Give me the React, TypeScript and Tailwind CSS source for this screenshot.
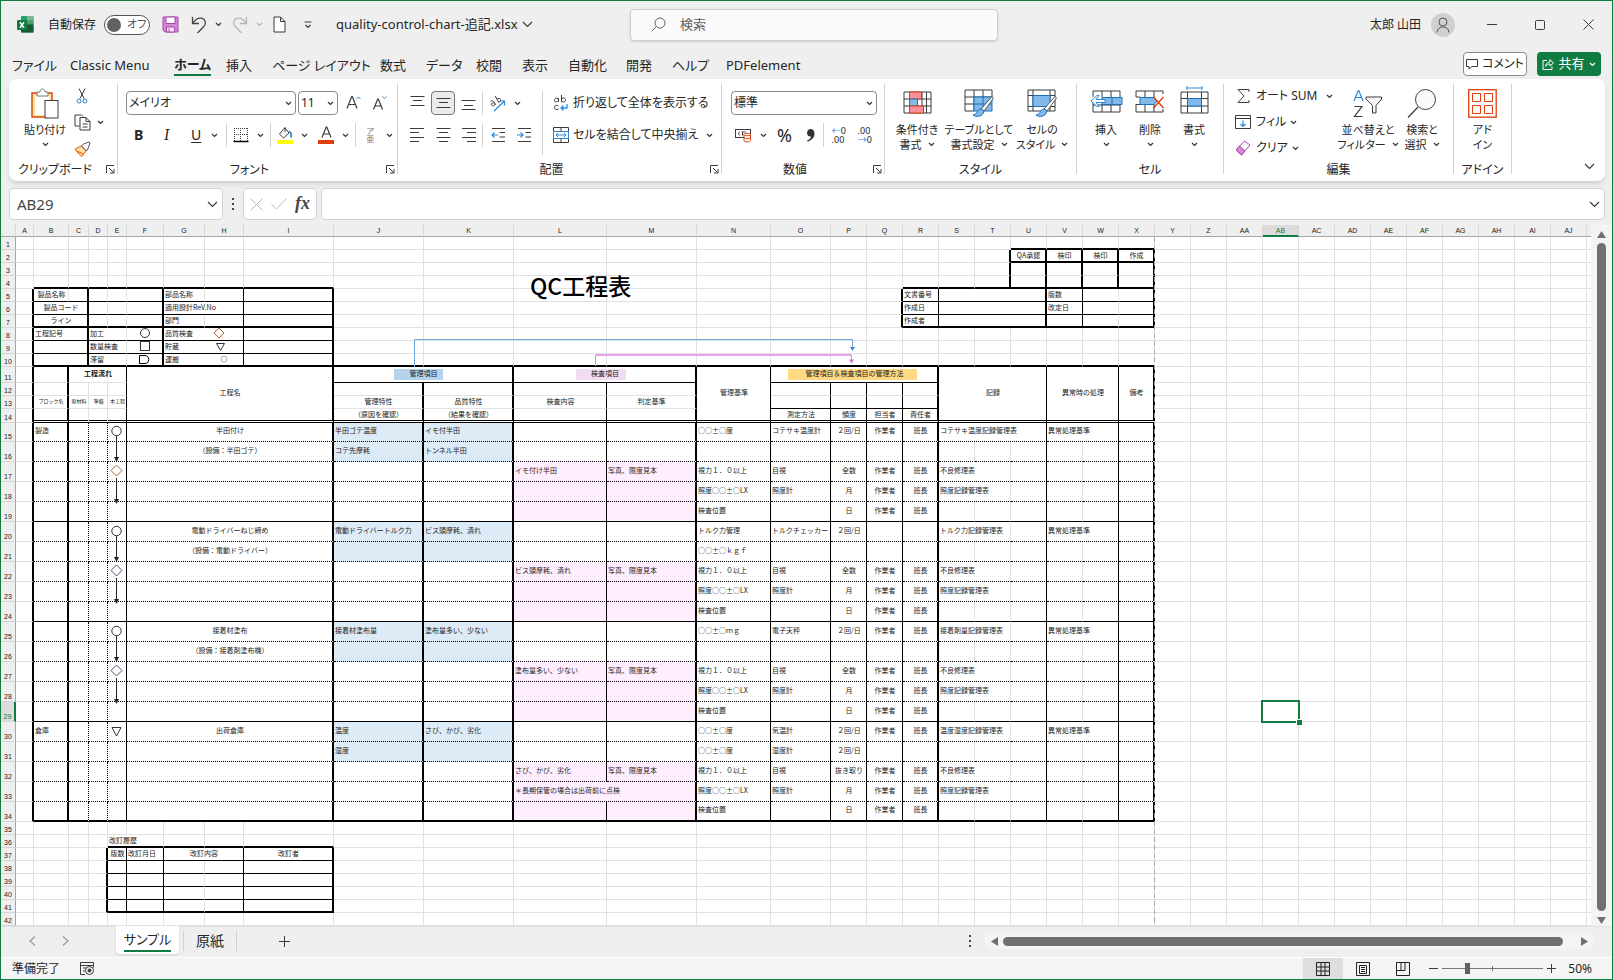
import type { ReactNode } from 'react'
import { clsx } from 'clsx'

/* ---------- icons ---------- */

type SvgProps = { w: number; h: number; children: ReactNode; stroke?: string }

function Svg({ w, h, children, stroke = '#3b3b3b' }: SvgProps) {
  return (
    <svg width={w} height={h} viewBox={`0 0 ${w} ${h}`} fill="none" stroke={stroke} className="shrink-0" aria-hidden="true">
      {children}
    </svg>
  )
}

const Chevron = ({ color = '#333' }: { color?: string }) => (
  <Svg w={7} h={5} stroke={color}>
    <path d="M1 1l2.5 2.5L6 1" strokeWidth="1.2" />
  </Svg>
)

const BigChevron = () => (
  <Svg w={11} h={7}>
    <path d="M1 1l4.5 4.5L10 1" strokeWidth="1.2" />
  </Svg>
)

const ExcelLogo = () => (
  <Svg w={17} h={17} stroke="none">
    <rect x="4" y="0" width="12.5" height="16.5" rx="1" fill="#21a366" />
    <rect x="10" y="0" width="6.5" height="4.5" fill="#7fb596" />
    <rect x="4" y="4.5" width="6" height="4" fill="#107c41" />
    <rect x="10" y="4.5" width="6.5" height="4" fill="#4ca06e" />
    <rect x="4" y="8.5" width="12.5" height="8" fill="#185c37" />
    <rect x="0" y="4" width="10" height="10" rx="1" fill="#107c41" />
    <path d="M3 6.2l4 5.6M7 6.2l-4 5.6" stroke="#fff" strokeWidth="1.5" />
  </Svg>
)

const SaveIcon = () => (
  <Svg w={17} h={17} stroke="#a349a4">
    <path d="M1 1h15v15H3l-2-2z" fill="#d586dc" />
    <path d="M4 1h9v6.5H4z" fill="#fff" />
    <path d="M4.5 16v-5h8v5z" fill="#f6e6f7" />
    <path d="M7 12.5V16" />
  </Svg>
)

const UndoIcon = ({ color = '#444' }: { color?: string }) => (
  <Svg w={16} h={18} stroke={color}>
    <path d="M1.5 1v6.5H8M1.5 7.5C4 3.500 7 1.500 10.500 2.200c4 1 5 5 2.500 8L6.500 17" strokeWidth="1.3" />
  </Svg>
)

const NewDocIcon = () => (
  <Svg w={13} h={17}>
    <path d="M1 1h6.500l4.500 4.500V16H1zM7.500 1v4.500H12" fill="#fff" />
  </Svg>
)

const SearchIcon = () => (
  <Svg w={15} h={15} stroke="#666">
    <circle cx="9" cy="6" r="5" />
    <path d="M5.500 9.500L.7 14.300" />
  </Svg>
)

const PasteIcon = () => (
  <Svg w={28} h={31}>
    <rect x="1" y="5" width="20" height="24" stroke="#d9480f" strokeWidth="1.500" fill="#ffe3a3" />
    <rect x="4" y="8" width="14" height="19" fill="#fff" stroke="none" />
    <path d="M6 8V4h3c0-4 5-4 5 0h3v4z" fill="#fff" stroke="#777" />
    <rect x="14" y="12.500" width="13" height="17.500" fill="#fff" />
  </Svg>
)

const CutIcon = () => (
  <Svg w={12} h={16}>
    <path d="M3 .5l5 10M9 .5l-5 10" />
    <circle cx="3" cy="13" r="2" stroke="#2b88d8" />
    <circle cx="9" cy="13" r="2" stroke="#2b88d8" />
  </Svg>
)

const CopyIcon = () => (
  <Svg w={17} h={17}>
    <path d="M5.500 12H1V1h6.500L9 2.500" />
    <path d="M6 3.500h6l4 4V16H6zM12 3.500v4h4M8.500 10h5M8.500 13h5" fill="#fff" />
  </Svg>
)

const BrushIcon = () => (
  <Svg w={17} h={16}>
    <path d="M1 8l6-3 5 5-4 5.500L4 12z" fill="#ffe0a3" stroke="#e8590c" />
    <path d="M2.500 10l7 3" stroke="#e8590c" />
    <path d="M7.500 5l5 5 1.500-2.500L16 2l-1-1-5.500 2z" fill="#fff" stroke="#555" />
  </Svg>
)

const BordersIcon = () => (
  <Svg w={16} h={16}>
    <path d="M1 1.500h14M1 7.500h14M1.500 1v13M7.500 1v13M14.500 1v13" strokeDasharray="1 1" />
    <path d="M.5 14.500h15" stroke="#000" strokeWidth="1.500" />
  </Svg>
)

const FillIcon = () => (
  <Svg w={16} h={18}>
    <path d="M7 2.500L2.500 8l4 4 5.500-5-3.500-4.500zM8 1v5" fill="#fff" />
    <path d="M12 5.500c2 .5 2.500 3 2 6" stroke="#2b88d8" strokeWidth="1.800" />
    <rect x="0" y="14" width="16" height="4" fill="#ffff00" stroke="none" />
  </Svg>
)

const FontColorIcon = () => (
  <Svg w={16} h={18}>
    <path d="M4 11.500L8.200 1h.6L13 11.500M5.500 8h6" strokeWidth="1.200" />
    <rect x="0" y="14" width="16" height="4" fill="#e03e0c" stroke="none" />
  </Svg>
)

const GrowFontIcon = ({ down = false }: { down?: boolean }) => (
  <Svg w={16} h={16}>
    {down ? (
      <>
        <path d="M1.500 14.500L5.700 4h.6l4.200 10.500M3 11h6" strokeWidth="1.200" />
        <path d="M10.500 1.500l2 2 2-2" stroke="#2b88d8" />
      </>
    ) : (
      <>
        <path d="M1 13.500L5.700 1.500h.6L11 13.500M2.700 9.500h6.600" strokeWidth="1.200" />
        <path d="M10.500 4l2-2 2 2" stroke="#2b88d8" />
      </>
    )}
  </Svg>
)

const Lines = ({ d }: { d: string }) => (
  <Svg w={15} h={14}>
    <path d={d} />
  </Svg>
)

const OrientIcon = () => (
  <Svg w={17} h={17}>
    <path d="M5 16L15 6.500M11 6h4.500v4.500" stroke="#2b88d8" strokeWidth="1.200" />
    <path d="M1.500 6.500c1-1.500 3-1 4 1l1 2M5.500 8c-2-.5-4 .5-3 2s3 1 3.500-1M6 1l4 6.500M8 4.500c1-1.500 3-1.500 3.500 0s-.5 2.500-2 2.500" />
  </Svg>
)

const IndentIcon = ({ right = false }: { right?: boolean }) => (
  <Svg w={15} h={14}>
    <path d="M1 .5h13M8.500 4.500H14M8.500 9H14M1 13.500h13" />
    <path d={right ? 'M0 7h6M3.500 4.500L6 7 3.500 9.500' : 'M7 7H1M3.500 4.500L1 7l2.500 2.500'} stroke="#2b88d8" strokeWidth="1.200" />
  </Svg>
)

const MergeIcon = () => (
  <Svg w={16} h={16}>
    <path d="M.5 4.500v-4h15v4M.5 11.500v4h15v-4M8 .5v4M8 11.500v4" />
    <rect x=".5" y="4.500" width="15" height="7" stroke="#2b88d8" fill="#fff" />
    <path d="M3 8h10M5 6L3 8l2 2M11 6l2 2-2 2" stroke="#2b88d8" />
  </Svg>
)

const CurrencyIcon = () => (
  <Svg w={17} h={15}>
    <rect x=".5" y="1.500" width="15" height="8" />
    <path d="M5 4c-2 0-2 3 0 3M7.500 3.500v4M7.500 4h3" />
    <path d="M9 6.500v6c0 2 6.500 2 6.500 0v-6" fill="#fff" stroke="#d9480f" />
    <ellipse cx="12.200" cy="6.500" rx="3.300" ry="1.300" fill="#fff" stroke="#d9480f" />
    <path d="M9 9.500c1 1.500 5.500 1.500 6.500 0" stroke="#d9480f" />
  </Svg>
)

const PaintBrush = () => (
  <>
    <path d="M17 20L28 7.500l1.500 1.500L20 22z" fill="#fff" stroke="#555" />
    <path d="M17 20c-4 0-3 5-8 6 3 2.500 10 2 11-4z" fill="#83b9ea" stroke="#1d6fb8" />
  </>
)

const CondFormatIcon = () => (
  <Svg w={29} h={24}>
    <path d="M1 1h27v21H1zM1 8h27M1 15h27M6.500 1v21M19 1v21M23.500 1v21" />
    <rect x="6.500" y="1" width="12" height="7" fill="#fb8f98" stroke="#e03e0c" />
    <rect x="6.500" y="8" width="8" height="7" fill="#83b9ea" stroke="#1d6fb8" />
    <rect x="6.500" y="15" width="14" height="7" fill="#fb8f98" stroke="#e03e0c" />
  </Svg>
)

const TableFormatIcon = () => (
  <Svg w={31} h={28}>
    <path d="M10 22H1V1h27v7M1 8h27M1 15h10M10 1v21M19 1v7" />
    <path d="M10 8h18v14H10zM10 15h18M19 8v14" fill="#83b9ea" stroke="#1d6fb8" />
    <PaintBrush />
  </Svg>
)

const CellStyleIcon = () => (
  <Svg w={31} h={28}>
    <path d="M1 1h27v21H1zM1 6.500h27M1 17.500h27M6 1v21M23 1v21" />
    <rect x="6" y="6.500" width="17" height="11" fill="#83b9ea" stroke="#1d6fb8" />
    <PaintBrush />
  </Svg>
)

const InsertCellsIcon = () => (
  <Svg w={33} h={35}>
    <path d="M3 11V5h27v6M3 17v9h27v-9M12 5v6M21 5v6M12 18v8M21 18v8M3 19h27" />
    <path d="M12 11.500h20v7H12zM22 11.500v7" fill="#83b9ea" stroke="#1d6fb8" />
    <path d="M15 13.500H6l3-4H7L1 15l6 5.500h2l-3-4h9z" fill="#fff" stroke="#2b88d8" />
  </Svg>
)

const DeleteCellsIcon = () => (
  <Svg w={31} h={35}>
    <path d="M1 11V5h27v3M1 18v8h27v-3M10 5v6M19 5v6M10 18v8M19 18v8M1 11h4M1 18.500h18" />
    <path d="M5 11.500h14l3 3.500-3 3.500H5z" fill="#83b9ea" stroke="#1d6fb8" />
    <path d="M18.500 11l10 11M28.500 11l-10 11" stroke="#e03e0c" strokeWidth="1.400" />
  </Svg>
)

const FormatCellsIcon = () => (
  <Svg w={29} h={35}>
    <path d="M7 2h15M7 0v4M22 0v4" stroke="#2b88d8" />
    <path d="M1 6h27v21H1zM1 12.500h27M1 20h27M7.500 6v21M21.500 6v21" />
    <rect x="7.500" y="12.500" width="14" height="7.500" fill="#83b9ea" stroke="#1d6fb8" />
  </Svg>
)

const SortFilterIcon = () => (
  <Svg w={30} h={29}>
    <path d="M1 12L5.300 1.500h.5L10 12M2.500 8.500h6" stroke="#2b88d8" strokeWidth="1.200" />
    <path d="M1.500 17.500H9l-7.500 10H9.500" strokeWidth="1.200" />
    <path d="M13 8h15.500v2L23 16.500V24h-3.500v-7.500L13 10z" fill="#fafafa" />
  </Svg>
)

const FindIcon = () => (
  <Svg w={30} h={30}>
    <circle cx="18.500" cy="11.500" r="10" fill="#fafafa" />
    <path d="M11 19L1 29.500" strokeWidth="1.200" />
  </Svg>
)

const AddinIcon = () => (
  <Svg w={29} h={29} stroke="#e03e0c">
    <rect x=".7" y=".7" width="27.500" height="27.500" strokeWidth="1.300" />
    <path d="M4.500 4.500h8v8h-8zM16.500 4.500h8v8h-8zM4.500 16.500h8v8h-8zM16.500 16.500h8v8h-8z" />
  </Svg>
)

const LauncherIcon = () => (
  <Svg w={9} h={9}>
    <path d="M.5 8V.5H8M3 3l4.500 4.500M8 4v4H4" />
  </Svg>
)

/* ---------- title bar and tabs ---------- */

function TitleBar() {
  return (
    <header className="flex h-[47px] items-center pl-4">
      <ExcelLogo />
      <label className="ml-3.5 flex items-center gap-2 text-xs">
        自動保存
        <input type="checkbox" className="peer sr-only" />
        <span className="flex h-5 w-[46px] items-center rounded-full border border-[#555] bg-white pl-0.5 text-[11px] text-[#555]">
          <span className="mr-1.5 size-3.5 rounded-full bg-[#616161]" />
          オフ
        </span>
      </label>
      <button className="ml-3" aria-label="上書き保存"><SaveIcon /></button>
      <button className="ml-3 flex items-center gap-2" aria-label="元に戻す"><UndoIcon /><Chevron /></button>
      <button className="ml-2.5 flex items-center gap-2" aria-label="やり直し">
        <span className="-scale-x-100"><UndoIcon color="#b5b5b5" /></span>
        <Chevron color="#b5b5b5" />
      </button>
      <button className="ml-2.5" aria-label="新規作成"><NewDocIcon /></button>
      <button className="ml-[18px]" aria-label="クイック アクセス ツール バーのユーザー設定">
        <Svg w={8} h={8}><path d="M.5 1h7M1.500 4L4 6.500 6.500 4" strokeWidth="1.200" /></Svg>
      </button>
      <button className="ml-6 flex w-[294px] items-center gap-1 text-[13px]">
        quality-control-chart-追記.xlsx
        <BigChevron />
      </button>

      <label className="flex h-8 w-[368px] items-center gap-3.5 rounded-sm border border-[#cfcfcf] bg-[#fafafa] pl-5 shadow-sm">
        <SearchIcon />
        <input aria-label="検索" placeholder="検索" className="w-full bg-transparent text-[13px] outline-none placeholder:text-[#616161]" />
      </label>

      <div className="ml-auto flex items-center">
        <span className="text-xs">太郎 山田</span>
        <span className="ml-2.5 flex size-6 items-center justify-center rounded-full bg-[#d0d0d0]">
          <Svg w={14} h={16} stroke="#555">
            <circle cx="7" cy="5" r="4" />
            <path d="M1 15.500C1.500 8 12.500 8 13 15.500" />
          </Svg>
        </span>
        <button className="ml-8" aria-label="最小化"><Svg w={10} h={10}><path d="M0 4.500h10" /></Svg></button>
        <button className="ml-[38px]" aria-label="最大化"><Svg w={10} h={10}><rect x=".5" y=".5" width="9" height="9" rx="1" /></Svg></button>
        <button className="mr-[18px] ml-[38px]" aria-label="閉じる"><Svg w={11} h={11}><path d="M.5.5l10 10M10.500.5l-10 10" /></Svg></button>
      </div>
    </header>
  )
}

const tabs = [
  { name: 'ファイル', width: 'w-[58px]' },
  { name: 'Classic Menu', width: 'w-[104px]' },
  { name: 'ホーム', width: 'w-[52px]' },
  { name: '挿入', width: 'w-[46px]' },
  { name: 'ページ レイアウト', width: 'w-[108px]' },
  { name: '数式', width: 'w-[46px]' },
  { name: 'データ', width: 'w-[50px]' },
  { name: '校閲', width: 'w-[46px]' },
  { name: '表示', width: 'w-[46px]' },
  { name: '自動化', width: 'w-[58px]' },
  { name: '開発', width: 'w-[46px]' },
  { name: 'ヘルプ', width: 'w-[54px]' },
  { name: 'PDFelement', width: 'w-[80px]' },
]

function RibbonTabs() {
  return (
    <nav className="flex h-[31px] items-start pl-[11px] text-[13px]">
      {tabs.map((tab) => (
        <div key={tab.name} className={clsx('flex shrink-0 pt-1.5', tab.width)}>
          <button
            className={clsx('h-[22px] leading-5 whitespace-nowrap', tab.name === 'ホーム' && 'border-b-2 border-[#107c41] font-bold')}
          >
            {tab.name}
          </button>
        </div>
      ))}
      <div className="mr-[11px] ml-auto flex gap-2.5 pt-1">
        <button className="flex h-6 w-16 items-center justify-center gap-1 rounded border border-[#8a8a8a] bg-white text-xs">
          <Svg w={12} h={11}><path d="M.5.5h11v7H6L3 10V7.500H.5z" /></Svg>
          コメント
        </button>
        <button className="flex h-6 w-16 items-center justify-center gap-1 rounded bg-[#107c41] text-[13px] text-white">
          <Svg w={12} h={12} stroke="#fff"><path d="M5 2.500H1v9h9V8.500M3.500 8.500C4 5 6 4 8 4V1.500L11.500 5 8 8V6C6 6 4.500 6.500 3.500 8.500z" /></Svg>
          共有
          <Chevron color="#fff" />
        </button>
      </div>
    </nav>
  )
}

/* ---------- ribbon ---------- */

type GroupProps = { label: string; width: string; launcher?: boolean; children: ReactNode }

function Group({ label, width, launcher, children }: GroupProps) {
  return (
    <>
      <section className={clsx('flex h-[94px] shrink-0 flex-col justify-between', width)}>
        {children}
        <div className={clsx('relative text-center text-xs leading-4', launcher && 'pr-4')}>
          {label}
          {launcher && (
            <button className="absolute right-0.5 bottom-1" aria-label={`${label}の設定`}><LauncherIcon /></button>
          )}
        </div>
      </section>
      <div className="h-[90px] w-px shrink-0 bg-[#d1d1d1]" />
    </>
  )
}

type BigButtonProps = { icon: ReactNode; top: string; bottom?: string; arrow?: boolean; width: string }

function BigButton({ icon, top, bottom, arrow = true, width }: BigButtonProps) {
  return (
    <button className={clsx('flex shrink-0 flex-col items-center pt-1', width)}>
      <span className="mb-1 flex h-[30px] items-center">{icon}</span>
      <span className="text-[11px] leading-[15px] whitespace-nowrap">{top}</span>
      <span className="flex h-[15px] items-center gap-1.5 text-[11px] leading-[15px] whitespace-nowrap">
        {bottom}
        {arrow && <Chevron />}
      </span>
    </button>
  )
}

const Sep = () => <span className="h-6 w-px shrink-0 bg-[#d1d1d1]" />

type DropProps = { label: string; value: string; width: string }

function Drop({ label, value, width }: DropProps) {
  return (
    <span className={clsx('relative flex items-center', width)}>
      <select aria-label={label} className="h-6 w-full appearance-none rounded border border-[#8a8a8a] bg-white pl-0.5 text-xs outline-none">
        <option>{value}</option>
      </select>
      <span className="pointer-events-none absolute right-1"><Chevron /></span>
    </span>
  )
}

const IconBtn = ({ children, label, arrow }: { children: ReactNode; label: string; arrow?: boolean }) => (
  <button className="flex h-6 shrink-0 items-center gap-2" aria-label={label}>
    {children}
    {arrow && <Chevron />}
  </button>
)

function Ribbon() {
  return (
    <div className="mr-[7px] ml-2 flex h-[102px] items-start rounded-lg bg-white pt-[5px] shadow-md">
      <Group label="クリップボード" width="w-[108px]" launcher>
        <div className="flex pl-2.5">
          <BigButton icon={<PasteIcon />} top="貼り付け" width="w-[52px]" />
          <div className="ml-[3px] flex flex-col gap-2.5 pt-1">
            <button className="pl-0.5" aria-label="切り取り"><CutIcon /></button>
            <button className="flex items-center gap-1.5" aria-label="コピー"><CopyIcon /><Chevron /></button>
            <button aria-label="書式のコピー"><BrushIcon /></button>
          </div>
        </div>
      </Group>

      <Group label="フォント" width="w-[279px]" launcher>
        <div className="flex flex-col gap-2 pt-[7px] pl-2">
          <div className="flex items-center">
            <Drop label="フォント名" value="メイリオ" width="w-[170px]" />
            <span className="w-0.5" />
            <Drop label="フォント サイズ" value="11" width="w-10" />
            <div className="ml-2 flex gap-2.5">
              <IconBtn label="拡大"><GrowFontIcon /></IconBtn>
              <IconBtn label="縮小"><GrowFontIcon down /></IconBtn>
            </div>
          </div>
          <div className="flex items-center pl-2">
            <button className="w-[30px] text-left text-sm font-bold">B</button>
            <button className="w-[27px] text-left font-serif text-base italic">I</button>
            <button className="mr-2 flex items-center gap-2.5 text-sm"><span className="underline underline-offset-2">U</span><Chevron /></button>
            <Sep />
            <div className="mr-1.5 ml-1.5"><IconBtn label="罫線" arrow><BordersIcon /></IconBtn></div>
            <Sep />
            <div className="mr-1.5 ml-1.5 flex gap-2.5">
              <IconBtn label="塗りつぶしの色" arrow><FillIcon /></IconBtn>
              <IconBtn label="フォントの色" arrow><FontColorIcon /></IconBtn>
            </div>
            <Sep />
            <button className="ml-2.5 flex items-center gap-3 text-[#777]" aria-label="ふりがな">
              <span className="flex flex-col text-[8px] leading-2"><span>ア</span><span>亜</span></span>
              <Chevron />
            </button>
          </div>
        </div>
      </Group>

      <Group label="配置" width="w-[323px]" launcher>
        <div className="flex pt-[7px] pl-2">
          <div className="flex flex-col gap-2">
            <div className="flex items-center">
              <div className="flex w-[70px] items-center justify-between pl-1">
                <IconBtn label="上揃え"><Lines d="M.5.500h14M3 4.500h9M.5 9.500h14" /></IconBtn>
                <button className="flex size-6 items-center justify-center rounded border border-[#777] bg-[#ebebeb]" aria-label="上下中央揃え">
                  <Lines d="M.5 2.500h14M3 6.500h9M.5 11.500h14" />
                </button>
                <IconBtn label="下揃え"><Lines d="M.5 4.500h14M3 9.500h9M.5 13.500h14" /></IconBtn>
              </div>
              <span className="w-1.5" />
              <Sep />
              <div className="ml-1.5"><IconBtn label="方向" arrow><OrientIcon /></IconBtn></div>
            </div>
            <div className="flex items-center">
              <div className="flex w-[70px] items-center justify-between pl-1">
                <IconBtn label="左揃え"><Lines d="M0 .5h14M0 4.500h9M0 9.500h14M0 13.500h9" /></IconBtn>
                <IconBtn label="中央揃え"><Lines d="M.5.500h14M3 4.500h9M.5 9.500h14M3 13.500h9" /></IconBtn>
                <IconBtn label="右揃え"><Lines d="M1 .5h14M6 4.500h9M1 9.500h14M6 13.500h9" /></IconBtn>
              </div>
              <span className="w-1.5" />
              <Sep />
              <div className="ml-2 flex gap-[11px]">
                <IconBtn label="インデントを減らす"><IndentIcon /></IconBtn>
                <IconBtn label="インデントを増やす"><IndentIcon right /></IconBtn>
              </div>
            </div>
          </div>
          <div className="mr-2.5 ml-2.5 h-16 w-px bg-[#d1d1d1]" />
          <div className="flex flex-col gap-2 text-xs whitespace-nowrap">
            <button className="flex h-6 items-center gap-1">
              <Svg w={16} h={16}>
                <path d="M5 3.500c-2-1-3.500 0-3.500 2s2.500 2 3.500 0M5.500 3v4M8.500 0v7M8.500 4c1-1.500 4-1.500 4 1s-3 2.500-4 1M5.500 11c-2.500-1.500-4 0-4 1.500s2 3 4 1.500" />
                <path d="M14 9v4H8M10.500 10.500L8 13l2.500 2.500" stroke="#2b88d8" strokeWidth="1.300" />
              </Svg>
              折り返して全体を表示する
            </button>
            <button className="flex h-6 items-center gap-1">
              <MergeIcon />
              <span className="mr-1">セルを結合して中央揃え</span>
              <Chevron />
            </button>
          </div>
        </div>
      </Group>

      <Group label="数値" width="w-[162px]" launcher>
        <div className="flex flex-col gap-2 pt-[7px] pl-[9px]">
          <Drop label="表示形式" value="標準" width="w-[146px]" />
          <div className="flex items-center pl-1">
            <IconBtn label="通貨表示形式" arrow><CurrencyIcon /></IconBtn>
            <button className="ml-2.5 text-lg leading-6">%</button>
            <button className="ml-3.5" aria-label="桁区切り">
              <Svg w={9} h={13} stroke="none"><path d="M4.500 0C7 0 8.500 2 8.500 4.500 8.500 8.500 6 11 1.500 12.500l-.5-1C3.500 10.500 5 9 5 7.500 2.500 8 1 6 1 4s1.500-4 3.500-4z" fill="#333" /></Svg>
            </button>
            <span className="w-2" />
            <Sep />
            <div className="ml-1.5 flex gap-2.5 text-right text-[9px] leading-[9px]">
              <button className="w-4" aria-label="小数点以下の表示桁数を増やす">
                <span className="flex items-center justify-end"><span className="text-[#2b88d8]">←</span>0</span>
                <span className="block">.00</span>
              </button>
              <button className="w-4" aria-label="小数点以下の表示桁数を減らす">
                <span className="block">.00</span>
                <span className="flex items-center justify-end"><span className="text-[#2b88d8]">→</span>0</span>
              </button>
            </div>
          </div>
        </div>
      </Group>

      <Group label="スタイル" width="w-[191px]">
        <div className="flex pl-[3px]">
          <BigButton icon={<CondFormatIcon />} top="条件付き" bottom="書式" width="w-[58px]" />
          <BigButton icon={<TableFormatIcon />} top="テーブルとして" bottom="書式設定" width="w-[66px]" />
          <BigButton icon={<CellStyleIcon />} top="セルの" bottom="スタイル" width="w-[60px]" />
        </div>
      </Group>

      <Group label="セル" width="w-[146px]">
        <div className="flex pl-[7px]">
          <BigButton icon={<InsertCellsIcon />} top="挿入" width="w-11" />
          <BigButton icon={<DeleteCellsIcon />} top="削除" width="w-11" />
          <BigButton icon={<FormatCellsIcon />} top="書式" width="w-11" />
        </div>
      </Group>

      <Group label="編集" width="w-[229px]">
        <div className="flex pl-[11px]">
          <div className="flex w-[104px] flex-col items-start gap-2.5 pt-1 text-xs whitespace-nowrap">
            <button className="flex h-4 items-center">
              <span className="w-[21px] pl-0.5"><Svg w={13} h={14}><path d="M12 3V.5H1L7 7 1 13.500h11V11" /></Svg></span>
              <span className="w-[70px] text-left">オート SUM</span>
              <Chevron />
            </button>
            <button className="flex h-4 items-center">
              <span className="w-[21px]"><Svg w={17} h={14}><path d="M.5.5h15v13H.5zM.5 3.500h15" /><path d="M8 5.500v6M5.500 9L8 11.500 10.500 9" stroke="#2b88d8" strokeWidth="1.200" /></Svg></span>
              <span className="mr-1">フィル</span>
              <Chevron />
            </button>
            <button className="flex h-4 items-center">
              <span className="w-[21px]"><Svg w={16} h={16} stroke="#a349a4"><path d="M1 10l8.500-9L15 5l-8.500 10z" fill="#fff" /><path d="M1 10l3.500-4L10 11l-3.500 4z" fill="#d586dc" /></Svg></span>
              <span className="mr-1">クリア</span>
              <Chevron />
            </button>
          </div>
          <BigButton icon={<SortFilterIcon />} top="並べ替えと" bottom="フィルター" width="w-[58px]" />
          <BigButton icon={<FindIcon />} top="検索と" bottom="選択" width="w-[50px]" />
        </div>
      </Group>

      <Group label="アドイン" width="w-[57px]">
        <BigButton icon={<AddinIcon />} top="アド" bottom="イン" arrow={false} width="w-[57px]" />
      </Group>

      <button className="mt-[79px] mr-2.5 ml-auto" aria-label="リボンを折りたたむ"><BigChevron /></button>
    </div>
  )
}

/* ---------- formula bar ---------- */

function FormulaBar() {
  return (
    <div className="flex h-11 items-start pt-[7px] pr-[7px] pl-2">
      <label className="flex h-8 w-[214px] items-center rounded border border-[#d1d1d1] bg-white pr-1">
        <input aria-label="名前ボックス" defaultValue="AB29" className="w-full bg-transparent pl-[7px] text-[15px] text-[#444] outline-none" />
        <BigChevron />
      </label>
      <div className="flex h-8 w-5 flex-col items-center justify-center gap-[3px]">
        <i className="size-0.5 bg-[#444]" />
        <i className="size-0.5 bg-[#444]" />
        <i className="size-0.5 bg-[#444]" />
      </div>
      <div className="mr-1 flex h-8 w-[74px] items-center gap-2 rounded border border-[#d1d1d1] bg-white pl-1.5">
        <button aria-label="キャンセル"><Svg w={13} h={13} stroke="#b8b8b8"><path d="M.5.5l12 12M12.500.5l-12 12" /></Svg></button>
        <button aria-label="入力"><Svg w={16} h={12} stroke="#b8b8b8"><path d="M.5 6l5 5L15.500.5" /></Svg></button>
        <button className="pb-0.5 font-[Liberation_Serif] text-[18px] leading-6 font-bold text-[#444] italic">fx</button>
      </div>
      <label className="flex h-8 flex-1 items-center rounded border border-[#d1d1d1] bg-white pr-1">
        <input aria-label="数式バー" className="w-full bg-transparent px-2 text-sm outline-none" />
        <BigChevron />
      </label>
    </div>
  )
}

/* ---------- sheet data ---------- */

const colWidths = [18, 35, 20, 19, 19, 37, 41, 39, 90, 90, 90, 93, 90, 74, 60, ...Array(22).fill(36)] as number[]
const ROWS = 42

function colName(i: number) {
  return i < 26 ? String.fromCharCode(65 + i) : 'A' + String.fromCharCode(39 + i)
}

function rowHeight(r: number) {
  if (r === 11) return 16
  if (r === 14) return 14
  if (r === 15) return 19
  return r > 15 && r < 35 ? 20 : 13
}

type Edge = 'grid' | 'thin' | 'thick' | 'dotted' | 'double'

const rightEdge: Record<Edge, string> = {
  grid: '[border-right:1px_solid_#e1e1e1]',
  thin: '[border-right:1px_solid_#000]',
  thick: '[border-right:2px_solid_#000]',
  dotted: '[border-right:1px_dotted_#000]',
  double: '[border-right:3px_double_#000]',
}

const bottomEdge: Record<Edge, string> = {
  grid: '[border-bottom:1px_solid_#e1e1e1]',
  thin: '[border-bottom:1px_solid_#000]',
  thick: '[border-bottom:2px_solid_#000]',
  dotted: '[border-bottom:1px_dotted_#000]',
  double: '[border-bottom:3px_double_#000]',
}

// column(s), first row, last row: line on the right side
const vertical: [string, number, number, Edge][] = [
  ['A I', 5, 34, 'thick'],
  ['C F', 5, 10, 'thick'],
  ['H', 5, 10, 'thin'],
  ['B K M R', 11, 34, 'thick'],
  ['E N U W', 11, 34, 'thin'],
  ['J', 12, 34, 'thick'],
  ['L O P Q', 12, 34, 'thin'],
  ['C D', 15, 34, 'dotted'],
  ['T U V W', 2, 4, 'thick'],
  ['Q U', 5, 7, 'thick'],
  ['R V', 5, 7, 'thin'],
  ['X', 2, 7, 'thick'],
  ['X', 11, 34, 'thick'],
  ['D I', 37, 41, 'thick'],
  ['E F H', 37, 41, 'thin'],
]

// row(s), first column, last column: line on the bottom side
const horizontal: [number[], string, string, Edge][] = [
  [[4, 7], 'B', 'I', 'thick'],
  [[5, 6, 8, 9], 'B', 'I', 'thin'],
  [[1, 2], 'U', 'X', 'thick'],
  [[4, 7], 'R', 'X', 'thick'],
  [[5, 6], 'R', 'X', 'thin'],
  [[10, 34], 'B', 'X', 'thick'],
  [[11], 'J', 'M', 'thin'],
  [[11, 13], 'O', 'R', 'thin'],
  [[14], 'B', 'X', 'double'],
  [[15, 16, 17, 18, 20, 21, 22, 23, 25, 26, 27, 28, 30, 31, 32, 33], 'B', 'X', 'dotted'],
  [[19, 24, 29], 'B', 'X', 'thin'],
  [[36, 41], 'E', 'I', 'thick'],
  [[37, 38, 39, 40], 'E', 'I', 'thin'],
]

const rights = new Map<string, Edge>()
const bottoms = new Map<string, Edge>()

vertical.forEach(([cols, from, to, edge]) => {
  cols.split(' ').forEach((c) => {
    for (let r = from; r <= to; r++) rights.set(c + r, edge)
  })
})
horizontal.forEach(([rows, from, to, edge]) => {
  rows.forEach((r) => {
    for (let c = from.charCodeAt(0); c <= to.charCodeAt(0); c++) bottoms.set(String.fromCharCode(c) + r, edge)
  })
})

type Cell = { text?: string; cols?: number; rows?: number; center?: boolean; bold?: boolean; small?: boolean }

const cells: Record<string, Cell> = {
  U2: { text: 'QA承認', center: true },
  V2: { text: '検印', center: true },
  W2: { text: '検印', center: true },
  X2: { text: '作成', center: true },
  B5: { text: '製品名称', center: true },
  B6: { text: '製品コード', center: true, cols: 2 },
  B7: { text: 'ライン', center: true, cols: 2 },
  G5: { text: '部品名称' },
  G6: { text: '適用設計ReV.No', cols: 2 },
  G7: { text: '部門' },
  R5: { text: '文書番号' },
  R6: { text: '作成日' },
  R7: { text: '作成者' },
  S5: { cols: 3 },
  S6: { cols: 3 },
  S7: { cols: 3 },
  V5: { text: '版数' },
  V6: { text: '改定日' },
  B8: { text: '工程記号', cols: 2 },
  B9: { cols: 2 },
  B10: { cols: 2 },
  D8: { text: '加工', cols: 2 },
  D9: { text: '数量検査', cols: 2 },
  D10: { text: '滞留', cols: 2 },
  G8: { text: '品質検査', cols: 2 },
  G9: { text: '貯蔵', cols: 2 },
  G10: { text: '運搬', cols: 2 },
  C11: { text: '工程流れ', center: true, bold: true, cols: 3 },
  F11: { text: '工程名', center: true, cols: 4, rows: 4 },
  J11: { text: '管理項目', center: true, cols: 2 },
  L11: { text: '検査項目', center: true, cols: 2 },
  N11: { text: '管理基準', center: true, rows: 4 },
  O11: { text: '管理項目＆検査項目の管理方法', center: true, cols: 4 },
  S11: { text: '記録', center: true, cols: 3, rows: 4 },
  V11: { text: '異常時の処理', center: true, cols: 2, rows: 4 },
  X11: { text: '備考', center: true, rows: 4 },
  B13: { text: 'ブロック名', center: true, small: true },
  C13: { text: '原材料', center: true, small: true },
  D13: { text: '準備', center: true, small: true },
  E13: { text: '本工程', center: true, small: true },
  J13: { text: '管理特性', center: true },
  K13: { text: '品質特性', center: true },
  L13: { text: '検査内容', center: true },
  M13: { text: '判定基準', center: true },
  J14: { text: '（原因を確認）', center: true },
  K14: { text: '（結果を確認）', center: true },
  O14: { text: '測定方法', center: true },
  P14: { text: '頻度', center: true },
  Q14: { text: '担当者', center: true },
  R14: { text: '責任者', center: true },
  E36: { text: '改訂履歴', cols: 2 },
  E37: { text: '版数', center: true },
  F37: { text: '改訂月日' },
  G37: { text: '改訂内容', center: true, cols: 2 },
  I37: { text: '改訂者', center: true },
}

// process rows, keyed by sheet row then column
const processRows: Record<number, Record<string, string>> = {
  15: { B: '製造', F: '半田付け', J: '半田ゴテ温度', K: 'イモ付半田', N: '○○±○度', O: 'コテサキ温度計', P: '２回/日', Q: '作業者', R: '班長', S: 'コテサキ温度記録管理表', V: '異常処理基準' },
  16: { F: '（設備：半田ゴテ）', J: 'コテ先摩耗', K: 'トンネル半田' },
  17: { L: 'イモ付け半田' },
  20: { F: '電動ドライバーねじ締め', J: '電動ドライバートルク力', K: 'ビス頭摩耗、潰れ', N: 'トルク力管理', O: 'トルクチェッカー', P: '２回/日', S: 'トルク力記録管理表', V: '異常処理基準' },
  21: { F: '（設備：電動ドライバー）', N: '○○±○ｋｇｆ' },
  22: { L: 'ビス頭摩耗、潰れ' },
  25: { F: '接着材塗布', J: '接着材塗布量', K: '塗布量多い、少ない', N: '○○±○ｍｇ', O: '電子天秤', P: '２回/日', Q: '作業者', R: '班長', S: '接着剤量記録管理表', V: '異常処理基準' },
  26: { F: '（設備：接着剤塗布機）' },
  27: { L: '塗布量多い、少ない' },
  30: { B: '倉庫', F: '出荷倉庫', J: '温度', K: 'さび、かび、劣化', N: '○○±○度', O: '気温計', P: '２回/日', Q: '作業者', R: '班長', S: '温度湿度記録管理表', V: '異常処理基準' },
  31: { J: '湿度', N: '○○±○度', O: '湿度計', P: '２回/日' },
  32: { L: 'さび、かび、劣化' },
  33: { L: '＊長期保管の場合は出荷前に点検' },
}

// every block ends with the same three inspection rows
const inspection: Record<string, string>[] = [
  { M: '写真、限度見本', N: '視力１．０以上', O: '目視', P: '全数', Q: '作業者', R: '班長', S: '不良修理表' },
  { N: '照度○○±○LX', O: '照度計', P: '月', Q: '作業者', R: '班長', S: '照度記録管理表' },
  { N: '検査位置', P: '日', Q: '作業者', R: '班長' },
]

for (let r = 15; r <= 34; r++) {
  const step = (r - 15) % 5
  const row = { ...(step > 1 ? inspection[step - 2] : {}), ...processRows[r] }
  if (r === 32) row.P = '抜き取り'
  cells['F' + r] = { cols: 4 }
  Object.entries(row).forEach(([c, text]) => {
    const cols = { F: 4, S: text.length > 9 ? 3 : 2, V: 2, L: r === 33 ? 2 : 1 }[c] ?? 1
    cells[c + r] = { text, cols, center: 'FPQR'.includes(c) }
  })
}

function fillOf(col: string, r: number) {
  if (r < 15 || r > 34) return ''
  const step = (r - 15) % 5
  if ((col === 'J' || col === 'K') && step < 2) return 'bg-[#ddebf7]'
  if ((col === 'L' || col === 'M') && step > 1) return 'bg-[#ffeefe]'
  return ''
}

const covered = new Set<string>()
Object.entries(cells).forEach(([key, cell]) => {
  const c0 = key.charCodeAt(0)
  const r0 = Number(key.slice(1))
  for (let r = r0; r < r0 + (cell.rows ?? 1); r++) {
    for (let c = c0; c < c0 + (cell.cols ?? 1); c++) {
      if (r !== r0 || c !== c0) covered.add(String.fromCharCode(c) + r)
    }
  }
})

/* ---------- sheet ---------- */

function SheetCell({ col, row }: { col: number; row: number }) {
  const name = colName(col)
  const key = name + row
  if (covered.has(key)) return null
  const cell = cells[key] ?? {}
  const lastCol = colName(col + (cell.cols ?? 1) - 1)
  const lastRow = row + (cell.rows ?? 1) - 1
  return (
    <td
      colSpan={cell.cols}
      rowSpan={cell.rows}
      className={clsx(
        'relative p-0 pl-px leading-2 whitespace-nowrap',
        rowHeight(row) > 14 ? 'pb-1' : 'pb-0.5',
        rightEdge[rights.get(lastCol + row) ?? 'grid'],
        bottomEdge[bottoms.get(name + lastRow) ?? 'grid'],
        fillOf(name, row),
        cell.center && 'text-center',
        cell.bold && 'font-bold',
        cell.small && 'text-[5px]',
      )}
    >
      {cell.text}
      {key === 'AB29' && (
        <span className="absolute -inset-0.5 z-10 border-2 border-[#107c41]">
          <span className="absolute -right-1 -bottom-1 size-1.5 border-t border-l border-white bg-[#107c41]" />
        </span>
      )}
    </td>
  )
}

function FlowArrow({ y }: { y: number }) {
  return (
    <>
      <path d={`M100.500 ${y}v24`} stroke="#222" />
      <path d={`M98 ${y + 21}h5l-2.500 5z`} fill="#222" stroke="none" />
    </>
  )
}

// drawing objects, in pixels from the top left corner of A1
function SheetShapes() {
  return (
    <svg width="1140" height="688" fill="none" stroke="#333" className="pointer-events-none absolute top-3 left-[15px]" aria-hidden="true">
      <path d="M1138.500 0v688" stroke="#a6a6a6" strokeDasharray="5 3" />
      <circle cx="129" cy="96" r="4.500" />
      <rect x="124.500" y="104.500" width="9" height="9" />
      <path d="M123.500 118.500h5.500c5 0 5 8 0 8h-5.500z" stroke="#000" />
      <path d="M203 91l5 5-5 5-5-5z" stroke="#b0622c" />
      <path d="M200.500 106.500h8l-4 7z" />
      <circle cx="208" cy="122" r="3" stroke="#9bb5c0" />
      <path d="M398.500 130V102.500H836.500V111" stroke="#6fa8dc" />
      <path d="M834 110h5l-2.500 4z" fill="#4a86c8" stroke="none" />
      <path d="M579.500 129V118H835.500V124" stroke="#e08be0" />
      <path d="M580 118H835" stroke="#e9a0e9" strokeWidth="2" />
      <path d="M833 122.500h5l-2.500 4z" fill="#d070d0" stroke="none" />
      {[194, 294, 394].map((y) => (
        <g key={y}>
          <circle cx="100.500" cy={y} r="4.700" />
          <FlowArrow y={y + 5} />
          <path d={`M100.500 ${y + 34}l5.500 5.500-5.500 5.500-5.500-5.500z`} stroke={y === 194 ? '#a8683c' : '#44546a'} />
          <FlowArrow y={y + 47} />
        </g>
      ))}
      <path d="M96 490.500h9l-4.500 8.500z" />
    </svg>
  )
}

function Sheet() {
  return (
    <div className="relative min-w-0 flex-1 overflow-hidden bg-white font-[Noto_Sans_CJK_JP,sans-serif] [font-feature-settings:normal]">
      {/* coloured labels behind the heading row */}
      <svg width="920" height="160" className="absolute top-0 left-0" aria-hidden="true">
        <rect x="393" y="144" width="49" height="11" fill="#b4d3ec" />
        <rect x="575" y="144" width="50" height="11" fill="#f2dcf3" />
        <rect x="787" y="144" width="129" height="11" fill="#ffd983" />
      </svg>
      <table
        className="relative table-fixed border-separate border-spacing-0 text-[7px] text-[#222]"
        style={{ width: colWidths.reduce((a, b) => a + b, 15) }}
      >
        <colgroup>
          <col style={{ width: 15 }} />
          {colWidths.map((w, i) => (
            <col key={i} style={{ width: w }} />
          ))}
        </colgroup>
        <thead>
          <tr className="h-3 bg-[#efefef] font-[Liberation_Sans,sans-serif] leading-2">
            <th className="border-r border-b border-r-[#d6d6d6] border-b-[#a6a6a6] p-0" />
            {colWidths.map((_, i) => (
              <th
                key={i}
                scope="col"
                className={clsx(
                  'border-r border-r-[#d6d6d6] p-0 pt-px font-normal',
                  colName(i) === 'AB' ? 'border-b-2 border-b-[#107c41] bg-[#dcdcdc] text-[#107c41]' : 'border-b border-b-[#a6a6a6] text-[#222]',
                )}
              >
                {i < 36 && colName(i)}
              </th>
            ))}
          </tr>
        </thead>
        <tbody>
          {Array.from({ length: ROWS }, (_, i) => i + 1).map((r) => (
            <tr key={r} style={{ height: rowHeight(r) }}>
              <th
                scope="row"
                className={clsx(
                  'border-b border-b-[#d6d6d6] p-0 align-bottom font-[Liberation_Sans,sans-serif] leading-2 font-normal',
                  r === 29 ? 'border-r-2 border-r-[#107c41] bg-[#dcdcdc] text-[#107c41]' : 'border-r border-r-[#a6a6a6] bg-[#efefef] text-[#222]',
                )}
              >
                {r}
              </th>
              {colWidths.map((_, c) => (
                <SheetCell key={c} col={c} row={r} />
              ))}
            </tr>
          ))}
        </tbody>
      </table>
      <SheetShapes />
      <h1 className="absolute top-[45px] left-[529px] text-[23px] leading-[30px] font-medium text-black">QC工程表</h1>
    </div>
  )
}

function VerticalScroll() {
  return (
    <div className="flex w-[21px] flex-col items-center bg-[#f4f4f4] pt-1.5 pb-0.5">
      <Svg w={9} h={7} stroke="none"><path d="M4.500 0L9 7H0z" fill="#707070" /></Svg>
      <div className="mt-[5px] mb-1.5 w-[9px] flex-1 rounded-full bg-[#707070]" />
      <Svg w={9} h={7} stroke="none"><path d="M4.500 7L9 0H0z" fill="#707070" /></Svg>
    </div>
  )
}

/* ---------- bottom bars ---------- */

function SheetTabs() {
  return (
    <div className="flex h-[31px] items-center border-t border-[#e1e1e1] pb-0.5 text-sm">
      <button className="ml-7" aria-label="前のシート"><Svg w={7} h={10} stroke="#999"><path d="M6 .5L1 5l5 4.500" strokeWidth="1.200" /></Svg></button>
      <button className="ml-[26px]" aria-label="次のシート"><Svg w={7} h={10} stroke="#999"><path d="M1 .5L6 5 1 9.500" strokeWidth="1.200" /></Svg></button>
      <button className="-mt-0.5 ml-[47px] flex h-7 w-[63px] items-start justify-center rounded-b bg-white pt-0.5 shadow-sm">
        <span className="border-b-2 border-[#107c41] text-[13px] leading-[22px]">サンプル</span>
      </button>
      <span className="ml-1 h-5 w-px bg-[#d0d0d0]" />
      <button className="w-[52px]">原紙</button>
      <span className="h-5 w-px bg-[#d0d0d0]" />
      <button className="ml-[42px]" aria-label="新しいシート"><Svg w={11} h={11}><path d="M5.500 0v11M0 5.500h11" /></Svg></button>
      <div className="ml-auto flex w-[643px] items-center">
        <span className="mr-3.5 flex flex-col gap-[3px]">
          <i className="size-0.5 bg-[#444]" />
          <i className="size-0.5 bg-[#444]" />
          <i className="size-0.5 bg-[#444]" />
        </span>
        <div className="mr-[18px] flex h-4 flex-1 items-center rounded-full bg-[#f4f4f4] px-1.5">
          <Svg w={7} h={9} stroke="none"><path d="M0 4.500L7 0v9z" fill="#707070" /></Svg>
          <div className="mr-[18px] ml-[5px] h-[9px] flex-1 rounded-full bg-[#707070]" />
          <Svg w={7} h={9} stroke="none"><path d="M7 4.500L0 0v9z" fill="#707070" /></Svg>
        </div>
      </div>
    </div>
  )
}

function StatusBar() {
  return (
    <footer className="flex h-[22px] items-center border-t border-white bg-[#f4f4f4] pl-[11px] text-xs">
      準備完了
      <button className="ml-5" aria-label="マクロの記録">
        <Svg w={15} h={14}>
          <path d="M5 12.500H.5V.5h13v5M.5 3.500h13M3 6h3M3 9h2" />
          <circle cx="9.500" cy="8.500" r="4" />
          <circle cx="9.500" cy="8.500" r="1.500" fill="#333" />
        </Svg>
      </button>
      <div className="ml-auto flex h-full items-center">
        <button className="flex h-full w-10 items-center justify-center bg-[#dedede]" aria-label="標準">
          <Svg w={14} h={14} stroke="#222"><path d="M.5.5h13v13H.5zM.5 5h13M.5 9h13M5 .5v13M9 .5v13" /></Svg>
        </button>
        <button className="flex w-10 justify-center" aria-label="ページ レイアウト">
          <Svg w={14} h={14} stroke="#222"><path d="M.5.5h13v13H.5zM3.500 3.500h7v8h-7zM5 5.500h4M5 7.500h4M5 9.500h4" /></Svg>
        </button>
        <button className="flex w-10 justify-center" aria-label="改ページ プレビュー">
          <Svg w={14} h={14} stroke="#222"><path d="M.5.5h13v13H.5zM.5 8.500h8.500v-8M5 .5v8" /></Svg>
        </button>
        <button className="ml-1.5" aria-label="縮小"><Svg w={9} h={9}><path d="M0 4.500h9" /></Svg></button>
        <span className="relative mx-1 flex w-[101px] items-center">
          <span className="absolute left-[50px] h-[5px] w-px bg-[#777]" />
          <input
            type="range"
            aria-label="ズーム"
            min={0}
            max={100}
            defaultValue={24}
            className="h-3 w-full appearance-none bg-[linear-gradient(#777,#777)] bg-[length:100%_1px] bg-center bg-no-repeat [&::-webkit-slider-thumb]:h-[11px] [&::-webkit-slider-thumb]:w-[5px] [&::-webkit-slider-thumb]:appearance-none [&::-webkit-slider-thumb]:bg-[#616161]"
          />
        </span>
        <button aria-label="拡大"><Svg w={9} h={9}><path d="M4.500 0v9M0 4.500h9" /></Svg></button>
        <span className="mr-5 ml-3">50%</span>
      </div>
    </footer>
  )
}

export default function App() {
  return (
    <div
      lang="ja"
      className="flex h-screen flex-col overflow-hidden border border-[#107c41] bg-[#efefef] font-[Noto_Sans,Noto_Sans_CJK_JP,sans-serif] text-[#262626] [font-feature-settings:'palt']"
    >
      <TitleBar />
      <RibbonTabs />
      <Ribbon />
      <FormulaBar />
      <main className="flex min-h-0 flex-1">
        <Sheet />
        <VerticalScroll />
      </main>
      <SheetTabs />
      <StatusBar />
    </div>
  )
}
